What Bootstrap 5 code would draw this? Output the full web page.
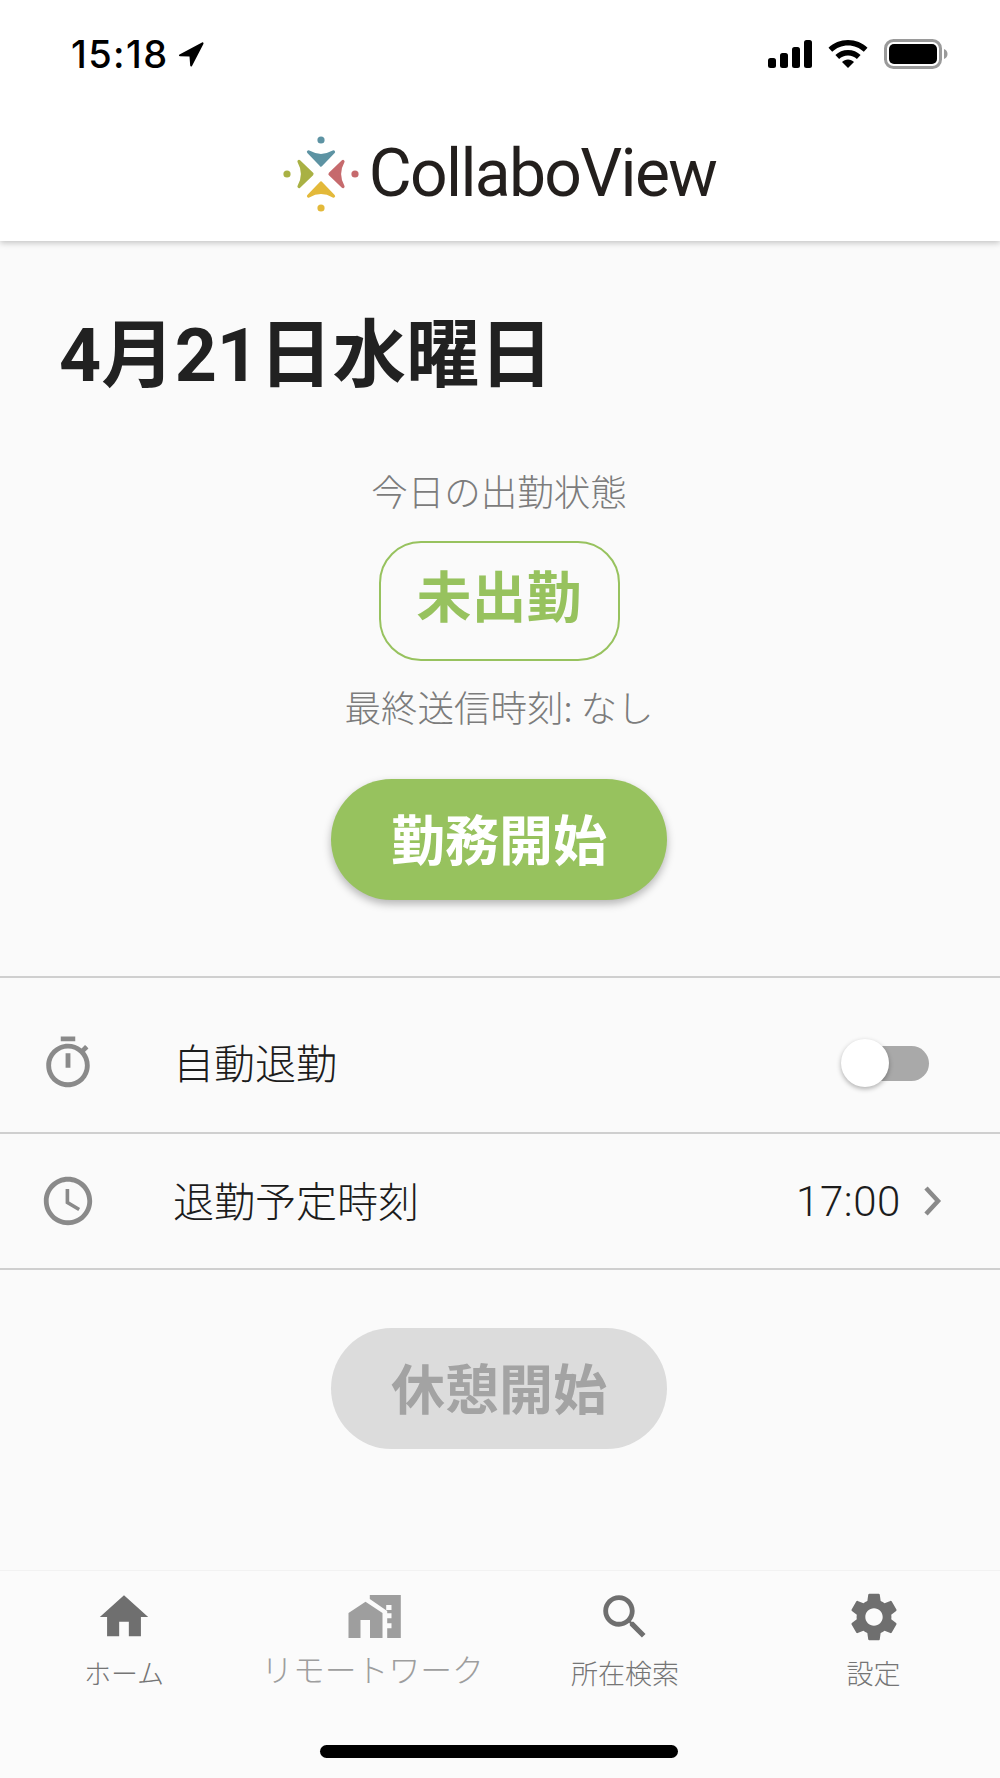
<!DOCTYPE html>
<html lang="ja">
<head>
  <meta charset="UTF-8">
  <meta name="viewport" content="width=device-width, initial-scale=1.0">
  <title>CollaboView</title>
  <link href="https://cdn.jsdelivr.net/npm/bootstrap@5.3.0/dist/css/bootstrap.min.css" rel="stylesheet">
  <style>
    body { background: #fafafa; font-family: "Noto Sans CJK JP", "Liberation Sans", sans-serif; color: #212121; }
    .app-shell { width: 1000px; height: 1778px; overflow: hidden; }
    .app-head { height: 241px; background: #fff; box-shadow: 0 2px 6px rgba(0,0,0,.22); }
    .status-row { height: 107px; padding: 33px 52px 0 71px; }
    .status-side { height: 42px; }
    .status-time { font-family: Inter, sans-serif; font-weight: 500; font-size: 38px; line-height: 42px; color: #000; letter-spacing: 1.4px; }
    .logo-row { height: 134px; padding-right: 3px; }
    .logo-text { font-family: Roboto, sans-serif; font-weight: 400; font-size: 66px; line-height: 1; color: #231f1d; letter-spacing: -1.7px; }
    .date-title { font-family: Roboto, "Noto Sans CJK JP", sans-serif; font-size: 73.5px; font-weight: 700; line-height: 80px; margin: 0; padding: 75px 0 0 59px; color: #212121; }
    .mid-col { padding-right: 2px; }
    .state-label { font-size: 36.5px; line-height: 44px; color: #7c7c7c; font-weight: 300; }
    .label-today { margin-top: 73px; }
    .state-pill { width: 241px; height: 120px; border: 2px solid #97c25e; border-radius: 42px; color: #97c25e; font-size: 55px; font-weight: 700; padding-bottom: 15px; margin-top: 28px; }
    .label-last { margin-top: 24px; }
    .pill-btn { width: 336px; height: 121px; border-radius: 61px; border: 0; font-size: 54px; font-weight: 700; padding: 0 0 5px; }
    .pill-on { background: #97c25e; color: #fff; box-shadow: 0 4px 8px rgba(0,0,0,.28); margin-top: 50px; }
    .pill-off, .pill-off:disabled { background: #dcdcdc; color: #a3a3a3; opacity: 1; margin-top: 58px; }
    .set-list { margin-top: 76px; }
    .set-row { border-top: 2px solid #cfcfcf; padding: 0 71px 0 39px; }
    .row-auto { height: 156px; padding-top: 16px; }
    .row-time { height: 138px; padding-right: 58px; border-bottom: 2px solid #cfcfcf; }
    .set-label { font-size: 41px; font-weight: 300; color: #1c1c1c; margin-left: 76px; padding-bottom: 2px; }
    .set-value { font-family: Roboto, sans-serif; font-weight: 300; font-size: 42px; color: #1c1c1c; letter-spacing: .6px; margin-right: 21px; }
    .switch-track { width: 88px; height: 48px; }
    .switch-rail { left: 18px; right: 0; top: 7px; height: 35px; background: #a9a9a9; border-radius: 18px; }
    .switch-knob { left: 0; top: 0; width: 48px; height: 48px; background: #fff; border-radius: 50%; box-shadow: 0 2px 5px rgba(0,0,0,.3); }
    .tab-bar { height: 208px; margin-top: auto; background: #fbfbfb; border-top: 1px solid #f2f2f2; }
    .tab-item { width: 250px; font-size: 27px; font-weight: 300; color: #757575; line-height: 32px; padding-top: 17px; }
    .tab-item span { margin-top: 11px; }
    .tab-home { padding-right: 2px; }
    .tab-gear { padding-right: 3px; }
    .tab-wide { color: #9e9e9e; font-size: 31.8px; padding-right: 5px; }
    .tab-wide span { margin-top: 6px; }
    .tab-item svg { fill: #6f6f6f; display: block; }
    .tab-wide svg { fill: #9e9e9e; }
    .home-bar { width: 358px; height: 13px; background: #000; border-radius: 7px; bottom: 20px; left: 320px; }
    .icon-grey { fill: #8a8a8a; }
  </style>
</head>
<body>
  <div class="app-shell d-flex flex-column position-relative">

    <!-- header -->
    <header class="app-head">
      <div class="status-row d-flex justify-content-between align-items-start">
        <div class="status-side d-flex align-items-center gap-2">
          <span class="status-time">15:18</span>
          <svg width="28" height="28" viewBox="0 0 28 28"><path d="M26 2.500 3.500 14.500c-1 .6-.6 1.800.5 1.800l9.500.3.7 9c.1 1.100 1.300 1.300 1.800.4L27.400 3.900c.5-1-.4-1.900-1.400-1.400z"/></svg>
        </div>
        <div class="status-side d-flex align-items-center">
          <svg width="44" height="28" viewBox="0 0 44 28"><rect x="0" y="18" width="8" height="10" rx="2.500"/><rect x="12" y="13" width="8" height="15" rx="2.500"/><rect x="24" y="7" width="8" height="21" rx="2.500"/><rect x="36" y="0" width="8" height="28" rx="2.500"/></svg>
          <svg width="40" height="28" viewBox="0 0 40 28" class="ms-3"><path d="M20 0C12.400 0 5.500 3 .5 7.800l3.700 3.900C8.300 7.800 13.800 5.400 20 5.400s11.700 2.400 15.800 6.300l3.700-3.900C34.500 3 27.600 0 20 0z"/><path d="M20 10c-4.900 0-9.400 1.900-12.600 5l3.700 3.900c2.300-2.200 5.400-3.500 8.900-3.500s6.600 1.300 8.900 3.500l3.700-3.900C29.400 11.900 24.900 10 20 10z"/><path d="M20 19.500c-2.300 0-4.400.9-6 2.400L20 28l6-6.100c-1.600-1.500-3.700-2.400-6-2.400z"/></svg>
          <svg width="64" height="30" viewBox="0 0 64 30" class="ms-3"><rect x="1.500" y="1.500" width="55" height="27" rx="8" fill="none" stroke="#9a9a9a" stroke-width="3"/><rect x="5" y="5" width="48" height="20" rx="5"/><path d="M60 10c2 .5 3.500 2.500 3.500 5s-1.500 4.500-3.500 5z" fill="#9a9a9a"/></svg>
        </div>
      </div>
      <div class="logo-row d-flex justify-content-center align-items-center gap-2">
        <svg width="80" height="76" viewBox="-40 -38 80 76">
          <g fill="#5d93a3" stroke="#5d93a3"><circle cx="0" cy="-34" r="3.600" stroke="none"/><path d="M0-9-12.500-22Q0-15 12.500-22z" stroke-width="3.200" stroke-linejoin="round"/></g>
          <g fill="#c66a6d" stroke="#c66a6d" transform="rotate(90)"><circle cx="0" cy="-34" r="3.600" stroke="none"/><path d="M0-9-12.500-22Q0-15 12.500-22z" stroke-width="3.200" stroke-linejoin="round"/></g>
          <g fill="#e3b93a" stroke="#e3b93a" transform="rotate(180)"><circle cx="0" cy="-34" r="3.600" stroke="none"/><path d="M0-9-12.500-22Q0-15 12.500-22z" stroke-width="3.200" stroke-linejoin="round"/></g>
          <g fill="#a9b144" stroke="#a9b144" transform="rotate(270)"><circle cx="0" cy="-34" r="3.600" stroke="none"/><path d="M0-9-12.500-22Q0-15 12.500-22z" stroke-width="3.200" stroke-linejoin="round"/></g>
        </svg>
        <span class="logo-text">CollaboView</span>
      </div>
    </header>

    <!-- today -->
    <h1 class="date-title">4月21日水曜日</h1>
    <div class="mid-col d-flex flex-column align-items-center">
      <div class="state-label label-today">今日の出勤状態</div>
      <div class="state-pill d-flex align-items-center justify-content-center">未出勤</div>
      <div class="state-label label-last">最終送信時刻: なし</div>
      <button type="button" class="btn pill-btn pill-on">勤務開始</button>
    </div>

    <!-- settings -->
    <div class="set-list">
      <div class="set-row row-auto d-flex align-items-center">
        <svg width="58" height="58" viewBox="0 0 24 24" class="icon-grey"><path d="M15 1H9v2h6V1zm-4 13h2V8h-2v6zm8.030-6.610 1.420-1.420c-.43-.51-.9-.99-1.410-1.410l-1.420 1.420C16.070 4.740 14.120 4 12 4c-4.970 0-9 4.030-9 9s4.020 9 9 9 9-4.030 9-9c0-2.120-.74-4.070-1.970-5.610zM12 20c-3.870 0-7-3.130-7-7s3.130-7 7-7 7 3.130 7 7-3.130 7-7 7z"/></svg>
        <span class="set-label">自動退勤</span>
        <div class="switch-track position-relative ms-auto">
          <div class="switch-rail position-absolute"></div>
          <div class="switch-knob position-absolute"></div>
        </div>
      </div>
      <div class="set-row row-time d-flex align-items-center">
        <svg width="58" height="58" viewBox="0 0 24 24" class="icon-grey"><path d="M11.990 2C6.470 2 2 6.480 2 12s4.470 10 9.990 10C17.520 22 22 17.520 22 12S17.520 2 11.990 2zM12 20c-4.420 0-8-3.580-8-8s3.580-8 8-8 8 3.580 8 8-3.580 8-8 8zm.5-13H11v6l5.250 3.150.75-1.230-4.500-2.670z"/></svg>
        <span class="set-label">退勤予定時刻</span>
        <span class="set-value ms-auto">17:00</span>
        <svg width="20" height="32" viewBox="0 0 20 32"><path d="M4 3 16 16 4 29" fill="none" stroke="#8a8a8a" stroke-width="4.500"/></svg>
      </div>
    </div>

    <div class="mid-col d-flex justify-content-center">
      <button type="button" class="btn pill-btn pill-off" disabled>休憩開始</button>
    </div>

    <!-- tabs -->
    <nav class="tab-bar d-flex">
      <div class="tab-item tab-home d-flex flex-column align-items-center">
        <svg width="58" height="58" viewBox="0 0 24 24"><path d="M10 20v-6h4v6h5v-8h3L12 3 2 12h3v8z"/></svg>
        <span>ホーム</span>
      </div>
      <div class="tab-item tab-wide d-flex flex-column align-items-center">
        <svg width="58" height="58" viewBox="-2.500 -4 58 58"><path d="M2 46V21L19 9.700 36 21v25H23.500V28H14v18z"/><path fill-rule="evenodd" d="M23.300 3H54.300V46H40.700V36.300H45V31.300H40.700V26.300H45V21.300H40.700V19L23.300 7zM39.700 13H45V18H39.700z"/></svg>
        <span>リモートワーク</span>
      </div>
      <div class="tab-item d-flex flex-column align-items-center">
        <svg width="58" height="58" viewBox="0 0 24 24"><path d="M15.500 14h-.79l-.28-.27C15.410 12.590 16 11.110 16 9.500 16 5.910 13.090 3 9.500 3S3 5.910 3 9.500 5.910 16 9.500 16c1.610 0 3.090-.59 4.230-1.570l.27.28v.79l5 4.990L20.490 19l-4.990-5zm-6 0C7.010 14 5 11.990 5 9.500S7.010 5 9.500 5 14 7.010 14 9.500 11.990 14 9.500 14z"/></svg>
        <span>所在検索</span>
      </div>
      <div class="tab-item tab-gear d-flex flex-column align-items-center">
        <svg width="58" height="58" viewBox="0 0 24 24"><path d="M19.140 12.940c.04-.3.06-.61.06-.94 0-.32-.02-.64-.07-.94l2.030-1.580c.18-.14.23-.41.12-.61l-1.920-3.320c-.12-.22-.37-.29-.59-.22l-2.390.96c-.5-.38-1.030-.7-1.620-.94l-.36-2.540c-.04-.24-.24-.41-.48-.41h-3.840c-.24 0-.43.17-.47.41l-.36 2.540c-.59.24-1.130.57-1.620.94l-2.390-.96c-.22-.08-.47 0-.59.22L2.740 8.870c-.12.21-.08.47.12.61l2.030 1.580c-.05.3-.09.63-.09.94s.02.64.07.94l-2.030 1.580c-.18.14-.23.41-.12.61l1.920 3.320c.12.22.37.29.59.22l2.390-.96c.5.38 1.030.7 1.620.94l.36 2.540c.05.24.24.41.48.41h3.840c.24 0 .44-.17.47-.41l.36-2.540c.59-.24 1.130-.56 1.620-.94l2.390.96c.22.08.47 0 .59-.22l1.920-3.320c.12-.22.07-.47-.12-.61l-2.010-1.580zM12 15.600c-1.980 0-3.600-1.620-3.600-3.600s1.620-3.600 3.600-3.600 3.600 1.620 3.600 3.600-1.620 3.600-3.600 3.600z"/></svg>
        <span>設定</span>
      </div>
    </nav>
    <div class="home-bar position-absolute"></div>
  </div>
  <script src="https://cdn.jsdelivr.net/npm/bootstrap@5.3.0/dist/js/bootstrap.bundle.min.js"></script>
</body>
</html>
